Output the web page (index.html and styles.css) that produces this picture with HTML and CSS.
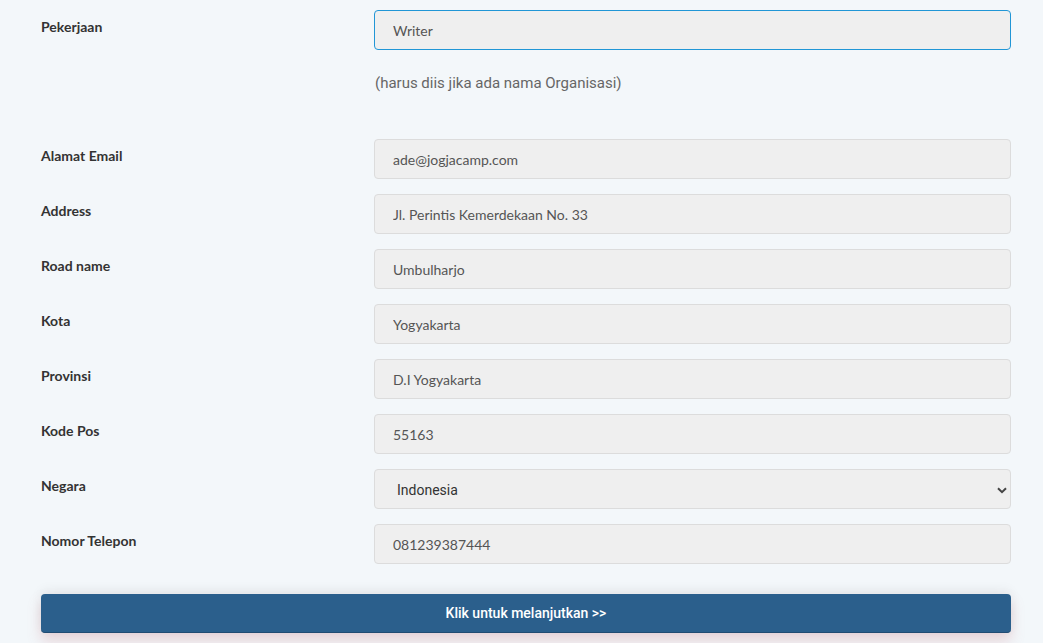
FILE: index.html
```html
<!DOCTYPE html>
<html>
<head>
<meta charset="utf-8">
<link rel="stylesheet" href="styles.css">
</head>
<body>
<form class="form">
  <div class="row">
    <label class="label">Pekerjaan</label>
    <div class="field">
      <input class="input focus" type="text" value="Writer">
      <p class="hint">(harus diis jika ada nama Organisasi)</p>
    </div>
  </div>
  <div class="row">
    <label class="label">Alamat Email</label>
    <div class="field"><input class="input" type="text" value="ade@jogjacamp.com"></div>
  </div>
  <div class="row">
    <label class="label">Address</label>
    <div class="field"><input class="input" type="text" value="Jl. Perintis Kemerdekaan No. 33"></div>
  </div>
  <div class="row">
    <label class="label">Road name</label>
    <div class="field"><input class="input" type="text" value="Umbulharjo"></div>
  </div>
  <div class="row">
    <label class="label">Kota</label>
    <div class="field"><input class="input" type="text" value="Yogyakarta"></div>
  </div>
  <div class="row">
    <label class="label">Provinsi</label>
    <div class="field"><input class="input" type="text" value="D.I Yogyakarta"></div>
  </div>
  <div class="row">
    <label class="label">Kode Pos</label>
    <div class="field"><input class="input" type="text" value="55163"></div>
  </div>
  <div class="row">
    <label class="label">Negara</label>
    <div class="field select-wrap">
      <select class="input select"><option>Indonesia</option></select>
      <svg class="chev" width="10" height="7" viewBox="0 0 10 7"><path d="M1 1.2 L5 5.2 L9 1.2" fill="none" stroke="#444" stroke-width="2"/></svg>
    </div>
  </div>
  <div class="row">
    <label class="label">Nomor Telepon</label>
    <div class="field"><input class="input" type="text" value="081239387444"></div>
  </div>
  <button class="btn" type="button">Klik untuk melanjutkan &gt;&gt;</button>
</form>
</body>
</html>
```
FILE: styles.css
```css
html, body {
  margin: 0;
  padding: 0;
  background: #f3f7fa;
  height: 643px;
  overflow: hidden;
}
.form {
  width: 970px;
  margin-left: 41px;
  padding-top: 10px;
  display: flex;
  flex-direction: column;
  gap: 15px;
}
.row {
  display: grid;
  grid-template-columns: 333px 637px;
}
.label {
  font-family: Lato, "Liberation Sans", sans-serif;
  font-weight: 700;
  font-size: 14px;
  line-height: 20px;
  color: #333;
  padding-top: 7px;
}
.field {
  display: flex;
  flex-direction: column;
}
.input {
  box-sizing: border-box;
  width: 637px;
  height: 40px;
  margin: 0;
  padding: 0 18px;
  background: #efefef;
  border: 1px solid #dcdcdc;
  border-radius: 4px;
  font-family: Lato, "Liberation Sans", sans-serif;
  font-size: 14px;
  color: #555;
  outline: none;
}
.input.focus {
  border-color: #2196d6;
}
.hint {
  margin: 24px 0 32px 1px;
  font-family: Roboto, "Liberation Sans", sans-serif;
  font-size: 15px;
  line-height: 18px;
  color: #666;
}
.select-wrap {
  position: relative;
}
.select {
  appearance: none;
  -webkit-appearance: none;
  padding-left: 22px;
  padding-top: 2px;
  font-family: Roboto, "Liberation Sans", sans-serif;
  color: #333;
}
.chev {
  position: absolute;
  right: 4px;
  top: 18px;
}
.btn {
  margin-top: 15px;
  width: 970px;
  height: 39px;
  background: #2b5f8c;
  color: #fff;
  border: 0;
  border-bottom: 1px solid #224c72;
  border-radius: 4px;
  font-family: Roboto, "Liberation Sans", sans-serif;
  font-weight: 500;
  font-size: 14px;
  box-shadow: 0 -4px 12px rgba(0,0,0,0.06), 0 8px 14px rgba(200,110,120,0.25);
}
```
